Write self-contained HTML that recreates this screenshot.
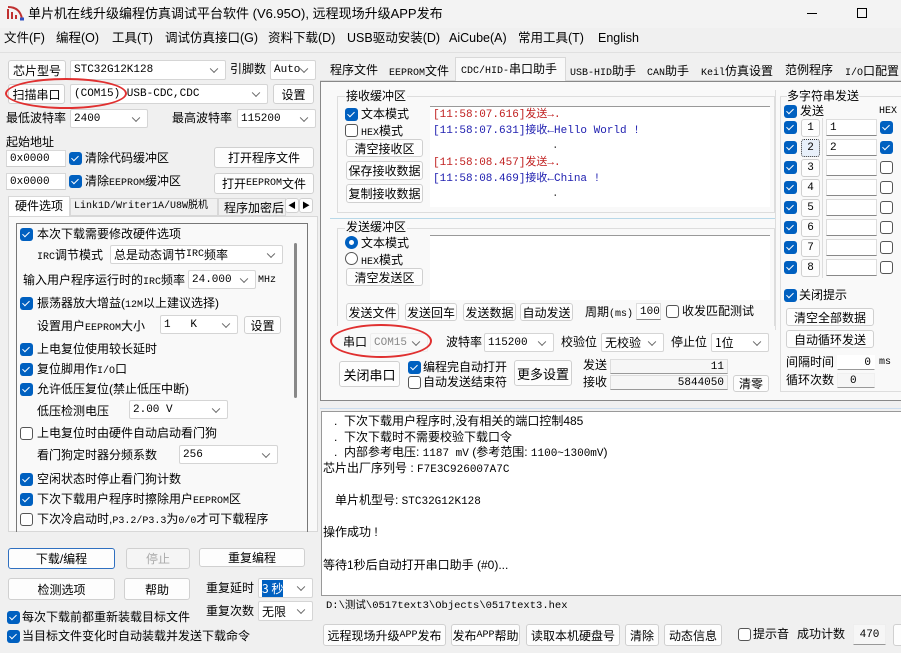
<!DOCTYPE html>
<html><head><meta charset="utf-8"><style>
*{box-sizing:border-box;margin:0;padding:0}
body{width:901px;height:653px;background:#f0f0f0;font-family:"Liberation Sans","Noto Sans CJK SC",sans-serif;font-size:12px;color:#000;position:relative;overflow:hidden}
.a{position:absolute;white-space:nowrap;line-height:1}
.b{position:absolute;background:#fdfdfd;border:1px solid #d0d0d0;border-radius:3px;text-align:center;white-space:nowrap;font-size:12px;display:flex;align-items:center;justify-content:center}
.s{position:absolute;background:#fff;border:1px solid #d5d5d5;border-radius:2px;font-family:"Liberation Mono","Noto Sans CJK SC",monospace;font-size:11px;padding-left:3px;display:flex;align-items:center;white-space:nowrap}
.s:after{content:"";position:absolute;right:8px;top:50%;width:5px;height:5px;border-right:1px solid #666;border-bottom:1px solid #666;transform:translateY(-70%) rotate(45deg)}
.i{position:absolute;background:#fff;border:1px solid #d8d8d8;border-bottom:1px solid #888;font-family:"Liberation Mono",monospace;font-size:11px;display:flex;align-items:center;padding:0 3px;white-space:nowrap}
.c{position:absolute;width:13px;height:13px;border-radius:3px;background:#0060c0}
.c:after{content:"";position:absolute;left:4px;top:2px;width:3px;height:6px;border-right:1.5px solid #fff;border-bottom:1.5px solid #fff;transform:rotate(45deg)}
.u{position:absolute;width:13px;height:13px;border-radius:3px;background:#fff;border:1px solid #555}
.m{font-family:"Liberation Mono","Noto Sans CJK SC",monospace;font-size:11px}
.n{font-family:"Liberation Sans Narrow","Liberation Mono",monospace;font-size:10px}
</style></head><body>
<div class="a" style="left:0;top:0;width:901px;height:28px;background:#f3f3f3"></div>
<svg class="a" style="left:6px;top:5px" width="18" height="16"><path d="M2 14 L2 4 M6 14 L6 7 M10 14 L10 10 M2 2 Q14 2 16 14" stroke="#c03030" stroke-width="2" fill="none"/><path d="M14 14 L18 14" stroke="#3050c0" stroke-width="3"/></svg>
<div class="a" style="left:28px;top:7px;font-size:13px">单片机在线升级编程仿真调试平台软件 (V6.95O), 远程现场升级APP发布</div>
<div class="a" style="left:807px;top:13px;width:10px;height:1px;background:#000"></div>
<div class="a" style="left:857px;top:8px;width:10px;height:10px;border:1px solid #000"></div>
<div class="a" style="left:4px;top:32px;font-size:12.5px">文件(F)</div>
<div class="a" style="left:56px;top:32px;font-size:12.5px">编程(O)</div>
<div class="a" style="left:112px;top:32px;font-size:12.5px">工具(T)</div>
<div class="a" style="left:165px;top:32px;font-size:12.5px">调试仿真接口(G)</div>
<div class="a" style="left:268px;top:32px;font-size:12.5px">资料下载(D)</div>
<div class="a" style="left:347px;top:32px;font-size:12.5px">USB驱动安装(D)</div>
<div class="a" style="left:449px;top:32px;font-size:12.5px">AiCube(A)</div>
<div class="a" style="left:518px;top:32px;font-size:12.5px">常用工具(T)</div>
<div class="a" style="left:598px;top:32px;font-size:12.5px">English</div>
<div class="a" style="left:0;top:52px;width:901px;height:1px;background:#e0e0e0"></div>

<div class="b" style="left:8px;top:60px;width:58px;height:20px">芯片型号</div>
<div class="s" style="left:70px;top:60px;width:156px;height:20px">STC32G12K128</div>
<div class="a" style="left:230px;top:63px">引脚数</div>
<div class="s" style="left:270px;top:60px;width:46px;height:20px">Auto</div>
<div class="b" style="left:8px;top:84px;width:57px;height:20px">扫描串口</div>
<div class="s" style="left:70px;top:84px;width:198px;height:20px">(COM15) USB-CDC,CDC</div>
<div class="b" style="left:273px;top:84px;width:41px;height:20px">设置</div>
<div class="a" style="left:5px;top:78px;width:122px;height:31px;border:2px solid #e03030;border-radius:50%"></div>
<div class="a" style="left:6px;top:112px">最低波特率</div>
<div class="s" style="left:70px;top:109px;width:78px;height:19px">2400</div>
<div class="a" style="left:172px;top:112px">最高波特率</div>
<div class="s" style="left:237px;top:109px;width:79px;height:19px">115200</div>
<div class="a" style="left:6px;top:136px">起始地址</div>
<div class="i" style="left:6px;top:150px;width:60px;height:17px;border-bottom-color:#ccc">0x0000</div>
<div class="c" style="left:69px;top:152px"></div><div class="a" style="left:85px;top:152px">清除代码缓冲区</div>
<div class="b" style="left:214px;top:147px;width:100px;height:21px">打开程序文件</div>
<div class="i" style="left:6px;top:173px;width:60px;height:17px;border-bottom-color:#ccc">0x0000</div>
<div class="c" style="left:69px;top:175px"></div><div class="a" style="left:85px;top:175px">清除<span class="n">EEPROM</span>缓冲区</div>
<div class="b" style="left:214px;top:173px;width:100px;height:21px">打开<span class="n">EEPROM</span>文件</div>
<div class="a" style="left:8px;top:196px;width:62px;height:21px;background:#fff;border:1px solid #d8d8d8;border-bottom:none"></div>
<div class="a" style="left:15px;top:200px">硬件选项</div>
<div class="a" style="left:70px;top:198px;width:148px;height:18px;border:1px solid #d8d8d8"></div>
<div class="a" style="left:74px;top:202px;font-family:'Liberation Mono','Noto Sans CJK SC',monospace;font-size:10px">Link1D/Writer1A/U8W脱机</div>
<div class="a" style="left:218px;top:198px;width:68px;height:18px;border:1px solid #d8d8d8;overflow:hidden"><div style="margin:3px 0 0 5px">程序加密后</div></div>
<div class="b" style="left:285px;top:198px;width:14px;height:15px;font-size:8px">◀</div>
<div class="b" style="left:299px;top:198px;width:14px;height:15px;font-size:8px">▶</div>
<div class="a" style="left:8px;top:216px;width:310px;height:316px;background:#f9f9f9;border:1px solid #d8d8d8"></div>
<div class="a" style="left:16px;top:223px;width:292px;height:309px;border:1px solid #777;border-bottom:none"></div>
<div class="a" style="left:294px;top:243px;width:3px;height:155px;background:#888;border-radius:2px"></div>
<div class="c" style="left:20px;top:228px"></div><div class="a" style="left:37px;top:228px">本次下载需要修改硬件选项</div>
<div class="a" style="left:37px;top:249px"><span class="n">IRC</span>调节模式</div>
<div class="s" style="left:110px;top:245px;width:173px;height:19px;font-family:'Liberation Sans','Noto Sans CJK SC';font-size:12px">总是动态调节<span class="n">IRC</span>频率</div>
<div class="a" style="left:23px;top:274px">输入用户程序运行时的<span class="n">IRC</span>频率</div>
<div class="s" style="left:188px;top:270px;width:68px;height:19px">24.000</div>
<div class="a n" style="left:258px;top:276px">MHz</div>
<div class="c" style="left:20px;top:297px"></div><div class="a" style="left:37px;top:297px">振荡器放大增益(<span class="n">12M</span>以上建议选择)</div>
<div class="a" style="left:37px;top:320px">设置用户<span class="n">EEPROM</span>大小</div>
<div class="s" style="left:160px;top:315px;width:78px;height:19px">1&nbsp;&nbsp;&nbsp;K</div>
<div class="b" style="left:244px;top:316px;width:37px;height:18px">设置</div>
<div class="c" style="left:20px;top:343px"></div><div class="a" style="left:37px;top:343px">上电复位使用较长延时</div>
<div class="c" style="left:20px;top:363px"></div><div class="a" style="left:37px;top:363px">复位脚用作<span class="n">I/O</span>口</div>
<div class="c" style="left:20px;top:383px"></div><div class="a" style="left:37px;top:383px">允许低压复位(禁止低压中断)</div>
<div class="a" style="left:37px;top:405px">低压检测电压</div>
<div class="s" style="left:129px;top:400px;width:99px;height:19px">2.00 V</div>
<div class="u" style="left:20px;top:427px"></div><div class="a" style="left:37px;top:427px">上电复位时由硬件自动启动看门狗</div>
<div class="a" style="left:37px;top:449px">看门狗定时器分频系数</div>
<div class="s" style="left:179px;top:445px;width:99px;height:19px">256</div>
<div class="c" style="left:20px;top:473px"></div><div class="a" style="left:37px;top:473px">空闲状态时停止看门狗计数</div>
<div class="c" style="left:20px;top:493px"></div><div class="a" style="left:37px;top:493px">下次下载用户程序时擦除用户<span class="n">EEPROM</span>区</div>
<div class="u" style="left:20px;top:513px"></div><div class="a" style="left:37px;top:513px">下次冷启动时,<span class="n">P3.2/P3.3</span>为<span class="n">0/0</span>才可下载程序</div>
<div class="b" style="left:8px;top:548px;width:107px;height:21px;border:1px solid #3070c0">下载/编程</div>
<div class="b" style="left:126px;top:548px;width:64px;height:21px;color:#aaa;background:#f5f5f5">停止</div>
<div class="b" style="left:199px;top:548px;width:106px;height:19px">重复编程</div>
<div class="b" style="left:8px;top:578px;width:107px;height:22px">检测选项</div>
<div class="b" style="left:124px;top:578px;width:66px;height:22px">帮助</div>
<div class="a" style="left:206px;top:582px">重复延时</div>
<div class="s" style="left:258px;top:578px;width:55px;height:20px;font-family:'Noto Sans CJK SC';font-size:12px"><span style="background:#0060c0;color:#fff">3 秒</span></div>
<div class="a" style="left:206px;top:605px">重复次数</div>
<div class="s" style="left:258px;top:601px;width:55px;height:20px;font-family:'Noto Sans CJK SC';font-size:12px">无限</div>
<div class="c" style="left:7px;top:611px"></div><div class="a" style="left:22px;top:611px">每次下载前都重新装载目标文件</div>
<div class="c" style="left:7px;top:630px"></div><div class="a" style="left:22px;top:630px">当目标文件变化时自动装载并发送下载命令</div>

<div class="a" style="left:320px;top:60px;width:581px;height:21px;border-bottom:1px solid #d8d8d8"></div>
<div class="a" style="left:330px;top:64px">程序文件</div>
<div class="a" style="left:389px;top:65px"><span class="n">EEPROM</span>文件</div>
<div class="a" style="left:455px;top:57px;width:111px;height:25px;background:#f9f9f9;border:1px solid #d8d8d8;border-bottom:none"></div>
<div class="a" style="left:461px;top:63px"><span class="n">CDC/HID-</span>串口助手</div>
<div class="a" style="left:570px;top:65px"><span class="n">USB-HID</span>助手</div>
<div class="a" style="left:647px;top:65px"><span class="n">CAN</span>助手</div>
<div class="a" style="left:701px;top:65px"><span class="n">Keil</span>仿真设置</div>
<div class="a" style="left:785px;top:64px">范例程序</div>
<div class="a" style="left:845px;top:65px"><span class="n">I/O</span>口配置</div>
<div class="a" style="left:320px;top:81px;width:590px;height:320px;background:#f9f9f9;border:1px solid #888"></div>
<div class="a" style="left:337px;top:96px;width:438px;height:117px;border:1px solid #ddd"></div>
<div class="a" style="left:345px;top:90px;background:#f9f9f9;padding:0 1px">接收缓冲区</div>
<div class="c" style="left:345px;top:108px"></div><div class="a" style="left:361px;top:108px">文本模式</div>
<div class="u" style="left:345px;top:124px"></div><div class="a" style="left:361px;top:125px"><span class="n">HEX</span>模式</div>
<div class="b" style="left:346px;top:139px;width:77px;height:18px">清空接收区</div>
<div class="b" style="left:346px;top:161px;width:77px;height:19px">保存接收数据</div>
<div class="b" style="left:346px;top:184px;width:77px;height:19px">复制接收数据</div>
<div class="a" style="left:430px;top:106px;width:340px;height:101px;background:#fff;border-top:1px solid #999"></div>
<div class="a m" style="left:433px;top:110px;color:#c02020">[11:58:07.616]发送→.</div>
<div class="a m" style="left:433px;top:126px;color:#2020b0">[11:58:07.631]接收←Hello World !</div>
<div class="a m" style="left:552px;top:141px;color:#444">.</div>
<div class="a m" style="left:433px;top:158px;color:#c02020">[11:58:08.457]发送→.</div>
<div class="a m" style="left:433px;top:174px;color:#2020b0">[11:58:08.469]接收←China !</div>
<div class="a m" style="left:552px;top:189px;color:#444">.</div>
<div class="a" style="left:330px;top:218px;width:445px;height:1px;background:#b8d8e8"></div>
<div class="a" style="left:337px;top:228px;width:438px;height:98px;border:1px solid #ddd;border-bottom:none"></div>
<div class="a" style="left:345px;top:221px;background:#f9f9f9;padding:0 1px">发送缓冲区</div>
<div class="a" style="left:345px;top:236px;width:13px;height:13px;border-radius:50%;background:#0060c0"><div style="margin:4px;width:5px;height:5px;border-radius:50%;background:#fff"></div></div>
<div class="a" style="left:361px;top:237px">文本模式</div>
<div class="a" style="left:345px;top:252px;width:13px;height:13px;border-radius:50%;border:1px solid #555;background:#fff"></div>
<div class="a" style="left:361px;top:254px"><span class="n">HEX</span>模式</div>
<div class="b" style="left:346px;top:268px;width:77px;height:18px">清空发送区</div>
<div class="a" style="left:430px;top:235px;width:340px;height:65px;background:#fff;border-top:1px solid #999"></div>
<div class="b" style="left:346px;top:303px;width:53px;height:18px">发送文件</div>
<div class="b" style="left:405px;top:303px;width:52px;height:18px">发送回车</div>
<div class="b" style="left:463px;top:303px;width:53px;height:18px">发送数据</div>
<div class="b" style="left:520px;top:303px;width:53px;height:18px">自动发送</div>
<div class="a" style="left:585px;top:306px">周期<span class="n">(ms)</span></div>
<div class="i" style="left:636px;top:303px;width:25px;height:17px;border-color:#ddd #ddd #888">100</div>
<div class="u" style="left:666px;top:305px"></div><div class="a" style="left:682px;top:305px">收发匹配测试</div>
<div class="a" style="left:775px;top:90px;width:1px;height:240px;background:#ddd"></div>
<div class="a" style="left:343px;top:336px">串口</div>
<div class="s" style="left:370px;top:333px;width:58px;height:19px;border-color:#eee;color:#888;background:#f9f9f9">COM15</div>
<div class="a" style="left:330px;top:324px;width:102px;height:34px;border:2px solid #e03030;border-radius:50%"></div>
<div class="a" style="left:446px;top:336px">波特率</div>
<div class="s" style="left:484px;top:333px;width:70px;height:19px">115200</div>
<div class="a" style="left:561px;top:336px">校验位</div>
<div class="s" style="left:601px;top:333px;width:63px;height:19px;font-family:'Noto Sans CJK SC';font-size:12px">无校验</div>
<div class="a" style="left:671px;top:336px">停止位</div>
<div class="s" style="left:711px;top:333px;width:58px;height:19px;font-family:'Noto Sans CJK SC';font-size:12px">1位</div>
<div class="b" style="left:339px;top:361px;width:61px;height:26px;font-size:13px">关闭串口</div>
<div class="c" style="left:408px;top:361px"></div><div class="a" style="left:423px;top:361px">编程完自动打开</div>
<div class="u" style="left:408px;top:376px"></div><div class="a" style="left:423px;top:376px">自动发送结束符</div>
<div class="b" style="left:514px;top:360px;width:58px;height:26px;font-size:13px">更多设置</div>
<div class="a" style="left:583px;top:359px">发送</div>
<div class="i" style="left:610px;top:359px;width:118px;height:15px;justify-content:flex-end;background:#f6f6f6;border-color:#ddd #ddd #999">11</div>
<div class="a" style="left:583px;top:376px">接收</div>
<div class="i" style="left:610px;top:375px;width:118px;height:15px;justify-content:flex-end;background:#f6f6f6;border-color:#ddd #ddd #999">5844050</div>
<div class="b" style="left:733px;top:375px;width:36px;height:17px">清零</div>
<div class="a" style="left:780px;top:96px;width:121px;height:296px;border:1px solid #ddd;border-right:none"></div>
<div class="a" style="left:787px;top:90px;background:#f9f9f9">多字符串发送</div>
<div class="c" style="left:784px;top:105px"></div><div class="a" style="left:800px;top:105px">发送</div>
<div class="a n" style="left:879px;top:107px">HEX</div>
<div class="a" style="left:822px;top:118px;width:1px;height:160px;background:#ddd"></div>
<div class="c" style="left:784px;top:121px"></div><div class="b m" style="left:801px;top:119px;width:19px;height:18px">1</div><div class="i" style="left:826px;top:119px;width:51px;height:17px;border-color:#ddd #ddd #888">1</div><div class="c" style="left:880px;top:121px"></div>
<div class="c" style="left:784px;top:141px"></div><div class="b m" style="left:801px;top:139px;width:19px;height:18px;border:1px dotted #333;background:#e8f0fa">2</div><div class="i" style="left:826px;top:139px;width:51px;height:17px;border-color:#ddd #ddd #888">2</div><div class="c" style="left:880px;top:141px"></div>
<div class="c" style="left:784px;top:161px"></div><div class="b m" style="left:801px;top:159px;width:19px;height:18px">3</div><div class="i" style="left:826px;top:159px;width:51px;height:17px;border-color:#ddd #ddd #888"></div><div class="u" style="left:880px;top:161px"></div>
<div class="c" style="left:784px;top:181px"></div><div class="b m" style="left:801px;top:179px;width:19px;height:18px">4</div><div class="i" style="left:826px;top:179px;width:51px;height:17px;border-color:#ddd #ddd #888"></div><div class="u" style="left:880px;top:181px"></div>
<div class="c" style="left:784px;top:201px"></div><div class="b m" style="left:801px;top:199px;width:19px;height:18px">5</div><div class="i" style="left:826px;top:199px;width:51px;height:17px;border-color:#ddd #ddd #888"></div><div class="u" style="left:880px;top:201px"></div>
<div class="c" style="left:784px;top:221px"></div><div class="b m" style="left:801px;top:219px;width:19px;height:18px">6</div><div class="i" style="left:826px;top:219px;width:51px;height:17px;border-color:#ddd #ddd #888"></div><div class="u" style="left:880px;top:221px"></div>
<div class="c" style="left:784px;top:241px"></div><div class="b m" style="left:801px;top:239px;width:19px;height:18px">7</div><div class="i" style="left:826px;top:239px;width:51px;height:17px;border-color:#ddd #ddd #888"></div><div class="u" style="left:880px;top:241px"></div>
<div class="c" style="left:784px;top:261px"></div><div class="b m" style="left:801px;top:259px;width:19px;height:18px">8</div><div class="i" style="left:826px;top:259px;width:51px;height:17px;border-color:#ddd #ddd #888"></div><div class="u" style="left:880px;top:261px"></div>
<div class="c" style="left:784px;top:289px"></div><div class="a" style="left:799px;top:289px">关闭提示</div>
<div class="b" style="left:786px;top:308px;width:88px;height:18px">清空全部数据</div>
<div class="b" style="left:786px;top:330px;width:88px;height:18px">自动循环发送</div>
<div class="a" style="left:786px;top:356px">间隔时间</div>
<div class="i" style="left:837px;top:355px;width:38px;height:15px;justify-content:flex-end;border-color:#fff #fff #999">0</div>
<div class="a n" style="left:879px;top:358px">ms</div>
<div class="a" style="left:786px;top:374px">循环次数</div>
<div class="i" style="left:837px;top:373px;width:38px;height:15px;border-color:#f0f0f0 #f0f0f0 #999;background:#f6f6f6;padding-left:12px">0</div>

<div class="a" style="left:320px;top:408px;width:581px;height:1px;background:#cde"></div>
<div class="a" style="left:321px;top:411px;width:580px;height:185px;background:#fff;border:1px solid #999;border-right:none"></div>
<div class="a" style="left:334px;top:415px">.&nbsp;&nbsp;下次下载用户程序时,没有相关的端口控制485</div>
<div class="a" style="left:334px;top:431px">.&nbsp;&nbsp;下次下载时不需要校验下载口令</div>
<div class="a" style="left:334px;top:446px">.&nbsp;&nbsp;内部参考电压: <span class="m">1187 mV</span> (参考范围: <span class="m">1100~1300mV</span>)</div>
<div class="a" style="left:323px;top:462px">芯片出厂序列号 : <span class="m">F7E3C926007A7C</span></div>
<div class="a" style="left:335px;top:494px">单片机型号: <span class="m">STC32G12K128</span></div>
<div class="a" style="left:323px;top:526px">操作成功 !</div>
<div class="a" style="left:323px;top:559px">等待1秒后自动打开串口助手 (#0)...</div>
<div class="a m" style="left:326px;top:601px;font-size:10.5px">D:\测试\0517text3\Objects\0517text3.hex</div>
<div class="b" style="left:323px;top:624px;width:123px;height:22px">远程现场升级<span class="n">APP</span>发布</div>
<div class="b" style="left:451px;top:624px;width:69px;height:22px">发布<span class="n">APP</span>帮助</div>
<div class="b" style="left:526px;top:624px;width:94px;height:22px">读取本机硬盘号</div>
<div class="b" style="left:625px;top:624px;width:34px;height:22px">清除</div>
<div class="b" style="left:664px;top:624px;width:58px;height:22px">动态信息</div>
<div class="u" style="left:738px;top:628px"></div><div class="a" style="left:753px;top:628px">提示音</div>
<div class="a" style="left:797px;top:628px">成功计数</div>
<div class="i" style="left:853px;top:624px;width:33px;height:21px;justify-content:center;background:#f6f6f6;border-color:#eee #eee #999">470</div>
<div class="b" style="left:893px;top:624px;width:20px;height:22px"></div>
</body></html>
